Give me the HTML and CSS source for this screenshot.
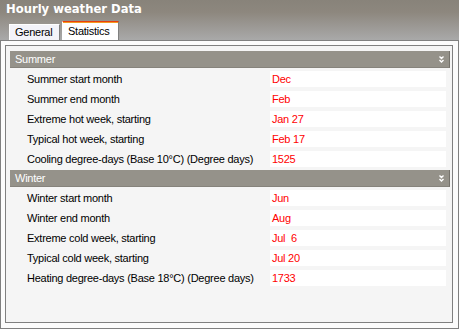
FILE: index.html
```html
<!DOCTYPE html>
<html>
<head>
<meta charset="utf-8">
<link rel="stylesheet" href="styles.css">
</head>
<body>
<div class="window">
  <div class="top">
    <div class="title">Hourly weather Data</div>
    <div class="tabs">
      <div class="tab">General</div>
      <div class="tab active">Statistics</div>
    </div>
  </div>
  <div class="frame">
    <div class="panel">
      <div class="section">
        <div class="sec-head"><span>Summer</span><svg class="chev" width="5" height="8" viewBox="0 0 5 8"><path d="M0.5 0.5 L2.5 2.5 L4.5 0.5 M0.5 4 L2.5 6 L4.5 4" fill="none" stroke="#fff" stroke-width="1.4"/></svg></div>
        <div class="rows">
          <div class="row"><div class="label">Summer start month</div><div class="value">Dec</div></div>
          <div class="row"><div class="label">Summer end month</div><div class="value">Feb</div></div>
          <div class="row"><div class="label">Extreme hot week, starting</div><div class="value">Jan 27</div></div>
          <div class="row"><div class="label">Typical hot week, starting</div><div class="value">Feb 17</div></div>
          <div class="row"><div class="label">Cooling degree-days (Base 10°C) (Degree days)</div><div class="value">1525</div></div>
        </div>
      </div>
      <div class="section">
        <div class="sec-head"><span>Winter</span><svg class="chev" width="5" height="8" viewBox="0 0 5 8"><path d="M0.5 0.5 L2.5 2.5 L4.5 0.5 M0.5 4 L2.5 6 L4.5 4" fill="none" stroke="#fff" stroke-width="1.4"/></svg></div>
        <div class="rows">
          <div class="row"><div class="label">Winter start month</div><div class="value">Jun</div></div>
          <div class="row"><div class="label">Winter end month</div><div class="value">Aug</div></div>
          <div class="row"><div class="label">Extreme cold week, starting</div><div class="value">Jul&nbsp; 6</div></div>
          <div class="row"><div class="label">Typical cold week, starting</div><div class="value">Jul 20</div></div>
          <div class="row"><div class="label">Heating degree-days (Base 18°C) (Degree days)</div><div class="value">1733</div></div>
        </div>
      </div>
    </div>
  </div>
</div>
</body>
</html>
```
FILE: styles.css
```css
* { box-sizing: border-box; }
html, body { margin: 0; padding: 0; }
body {
  width: 459px;
  height: 329px;
  overflow: hidden;
  background: #ffffff;
  font-family: "Liberation Sans", Arial, sans-serif;
  font-size: 11px;
  letter-spacing: -0.25px;
}
.window { width: 459px; height: 329px; display: flex; flex-direction: column; }
.top {
  height: 40px;
  background: linear-gradient(#88837a, #8d877e 30%, #a9a9a9);
  display: flex;
  flex-direction: column;
}
.title {
  height: 21px;
  padding: 2px 0 0 6px;
  font-family: "DejaVu Sans", sans-serif;
  font-weight: bold;
  font-size: 11.6px;
  letter-spacing: 0;
  color: #ffffff;
  line-height: 15px;
}
.tabs {
  flex: 1;
  display: flex;
  align-items: flex-end;
  padding-left: 9px;
}
.tab {
  height: 16px;
  width: 51px;
  background: #f3f3fa;
  border-top: 1px solid #ffffff;
  border-left: 1px solid #ffffff;
  border-right: 1px solid #808080;
  color: #000;
  padding-left: 5px;
  line-height: 15px;
}
.tab.active {
  margin-left: 2px;
  width: 57px;
  height: 19px;
  background: #ffffff;
  border-top: 1px solid #e8400c;
  box-shadow: inset 0 1px 0 #f59a20;
  padding-left: 5px;
  padding-top: 2px;
  line-height: 15px;
}
.frame {
  flex: 1;
  border: 1px solid #808080;
  background: #fcfcfc;
  padding: 4px 5px 5px 4px;
  display: flex;
}
.panel {
  flex: 1;
  border: 1px solid #808080;
  background: #f5f5f5;
  padding: 5px 2px 0 4px;
}
.sec-head {
  height: 17px;
  background: #95928a;
  border-right: 1px solid #75726b;
  border-bottom: 1px solid #86837c;
  color: #ffffff;
  padding: 1px 5px 0 5px;
  line-height: 15px;
  display: flex;
  justify-content: space-between;
  align-items: center;
}
.chev { display: block; }
.rows {
  padding: 3px 0 3px 17px;
  display: flex;
  flex-direction: column;
  gap: 4px;
}
.row {
  display: flex;
  height: 16px;
  line-height: 16px;
}
.label { width: 243px; color: #000; white-space: nowrap; }
.value {
  width: 176px;
  background: #ffffff;
  color: #ff0000;
  padding-left: 2px;
  white-space: nowrap;
}
```
